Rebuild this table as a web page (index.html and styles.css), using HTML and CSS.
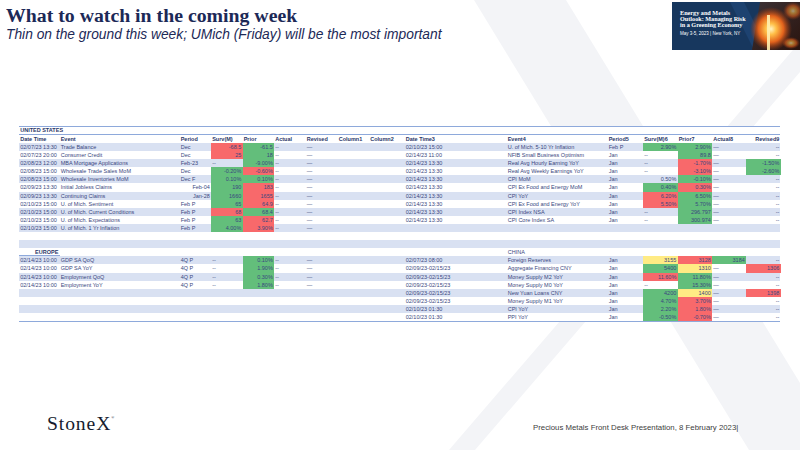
FILE: index.html
```
<!DOCTYPE html>
<html lang="en">
<head>
<meta charset="utf-8">
<title>What to watch in the coming week</title>
<link rel="stylesheet" href="styles.css">
</head>
<body>
<div class="slide">
  <svg class="watermark" viewBox="0 0 800 450" aria-hidden="true">
    <polygon points="474,0 566,0 841,450 749,450" fill="#f3f4f7"/>
    <polygon points="836,0 862,0 475,450 449,450" fill="#f3f4f7"/>
  </svg>

  <header class="top">
    <div class="titles">
      <h1>What to watch in the coming week</h1>
      <p class="sub">Thin on the ground this week; UMich (Friday) will be the most important</p>
    </div>
    <div class="banner">
      <svg class="banner-bg" viewBox="0 0 128 48" preserveAspectRatio="none" aria-hidden="true">
        <defs>
          <radialGradient id="glow" cx="0.5" cy="0.5" r="0.5">
            <stop offset="0" stop-color="#fff4c4"/>
            <stop offset="0.25" stop-color="#ffbf48"/>
            <stop offset="0.6" stop-color="#e2621c"/>
            <stop offset="1" stop-color="#a33a12" stop-opacity="0"/>
          </radialGradient>
          <linearGradient id="photo" x1="0" y1="0" x2="1" y2="1">
            <stop offset="0" stop-color="#3d3236"/>
            <stop offset="1" stop-color="#2a140e"/>
          </linearGradient>
        </defs>
        <rect width="128" height="48" fill="#17375e"/>
        <polygon points="58,0 72,0 96,48 82,48" fill="#1d4270"/>
        <polygon points="88,0 128,0 128,48 80,48" fill="url(#photo)"/>
        <ellipse cx="99" cy="27" rx="21" ry="22" fill="url(#glow)"/>
        <ellipse cx="121" cy="9" rx="10" ry="9" fill="url(#glow)" opacity="0.55"/>
        <ellipse cx="119" cy="41" rx="9" ry="6" fill="url(#glow)" opacity="0.6"/>
        <rect x="95" y="13" width="3" height="35" fill="#fff0b0" opacity="0.9"/>
      </svg>
      <div class="banner-text">
        <div class="bt">Energy and Metals</div>
        <div class="bt">Outlook: Managing Risk</div>
        <div class="bt">in a Greening Economy</div>
        <div class="bd">May 3-5, 2023 | New York, NY</div>
      </div>
    </div>
  </header>

  <section class="tbl">
    <div class="row region"><span class="lab">UNITED STATES</span></div>
    <div class="row head">
      <span>Date Time</span><span>Event</span><span>Period</span><span>Surv(M)</span><span>Prior</span><span>Actual</span><span>Revised</span><span>Column1</span><span>Column2</span>
      <span>Date Time3</span><span>Event4</span><span>Period5</span><span>Surv(M)6</span><span>Prior7</span><span>Actual8</span><span class="r">Revised9</span>
    </div>

    <div class="row s">
      <span>02/07/23 13:30</span><span>Trade Balance</span><span>Dec</span><span class="r rd">-68.5</span><span class="r g">-61.5</span><span>--</span><span>—</span><span></span><span></span>
      <span>02/10/23 15:00</span><span>U. of Mich. 5-10 Yr Inflation</span><span>Feb P</span><span class="r g">2.90%</span><span class="r g">2.90%</span><span>—</span><span class="r">--</span>
    </div>
    <div class="row">
      <span>02/07/23 20:00</span><span>Consumer Credit</span><span>Dec</span><span class="r rd">25</span><span class="r g">18</span><span>--</span><span>—</span><span></span><span></span>
      <span>02/14/23 11:00</span><span>NFIB Small Business Optimism</span><span>Jan</span><span>--</span><span class="r g">89.8</span><span>—</span><span class="r">--</span>
    </div>
    <div class="row s">
      <span>02/08/23 12:00</span><span>MBA Mortgage Applications</span><span>Feb-23</span><span>--</span><span class="r g">-9.00%</span><span>--</span><span>—</span><span></span><span></span>
      <span>02/14/23 13:30</span><span>Real Avg Hourly Earning YoY</span><span>Jan</span><span>--</span><span class="r rd">-1.70%</span><span>—</span><span class="r g">-1.50%</span>
    </div>
    <div class="row">
      <span>02/08/23 15:00</span><span>Wholesale Trade Sales MoM</span><span>Dec</span><span class="r g">-0.20%</span><span class="r rd">-0.60%</span><span>--</span><span>—</span><span></span><span></span>
      <span>02/14/23 13:30</span><span>Real Avg Weekly Earnings YoY</span><span>Jan</span><span>--</span><span class="r rd">-3.10%</span><span>—</span><span class="r g">-2.60%</span>
    </div>
    <div class="row s">
      <span>02/08/23 15:00</span><span>Wholesale Inventories MoM</span><span>Dec F</span><span class="r g">0.10%</span><span class="r g">0.10%</span><span>--</span><span>—</span><span></span><span></span>
      <span>02/14/23 13:30</span><span>CPI MoM</span><span>Jan</span><span class="r">0.50%</span><span class="r g">-0.10%</span><span>—</span><span class="r">--</span>
    </div>
    <div class="row">
      <span>02/09/23 13:30</span><span>Initial Jobless Claims</span><span class="r">Feb-04</span><span class="r g">190</span><span class="r rd">183</span><span>--</span><span>—</span><span></span><span></span>
      <span>02/14/23 13:30</span><span>CPI Ex Food and Energy MoM</span><span>Jan</span><span class="r g">0.40%</span><span class="r rd">0.30%</span><span>—</span><span class="r">--</span>
    </div>
    <div class="row s">
      <span>02/09/23 13:30</span><span>Continuing Claims</span><span class="r">Jan-28</span><span class="r g">1660</span><span class="r rd">1655</span><span>--</span><span>—</span><span></span><span></span>
      <span>02/14/23 13:30</span><span>CPI YoY</span><span>Jan</span><span class="r rd">6.20%</span><span class="r g">6.50%</span><span>—</span><span class="r">--</span>
    </div>
    <div class="row">
      <span>02/10/23 15:00</span><span>U. of Mich. Sentiment</span><span>Feb P</span><span class="r g">65</span><span class="r rd">64.9</span><span>--</span><span>—</span><span></span><span></span>
      <span>02/14/23 13:30</span><span>CPI Ex Food and Energy YoY</span><span>Jan</span><span class="r rd">5.50%</span><span class="r g">5.70%</span><span>—</span><span class="r">--</span>
    </div>
    <div class="row s">
      <span>02/10/23 15:00</span><span>U. of Mich. Current Conditions</span><span>Feb P</span><span class="r rd">68</span><span class="r g">68.4</span><span>--</span><span>—</span><span></span><span></span>
      <span>02/14/23 13:30</span><span>CPI Index NSA</span><span>Jan</span><span>--</span><span class="r g">296.797</span><span>—</span><span class="r">--</span>
    </div>
    <div class="row">
      <span>02/10/23 15:00</span><span>U. of Mich. Expectations</span><span>Feb P</span><span class="r g">63</span><span class="r rd">62.7</span><span>--</span><span>—</span><span></span><span></span>
      <span>02/14/23 13:30</span><span>CPI Core Index SA</span><span>Jan</span><span>--</span><span class="r g">300.974</span><span>—</span><span class="r">--</span>
    </div>
    <div class="row s">
      <span>02/10/23 15:00</span><span>U. of Mich. 1 Yr Inflation</span><span>Feb P</span><span class="r g">4.00%</span><span class="r rd">3.90%</span><span>--</span><span>—</span>
    </div>
    <div class="row"></div>
    <div class="row s"></div>
    <div class="row">
      <span class="eu">EUROPE</span><span></span><span></span><span></span><span></span><span></span><span></span><span></span><span></span><span></span><span>CHINA</span>
    </div>
    <div class="row s">
      <span>02/14/23 10:00</span><span>GDP SA QoQ</span><span>4Q P</span><span>--</span><span class="r g">0.10%</span><span>--</span><span>—</span><span></span><span></span>
      <span>02/07/23 08:00</span><span>Foreign Reserves</span><span>Jan</span><span class="r y">3155</span><span class="r rd">3128</span><span class="r g">3184</span><span class="r">--</span>
    </div>
    <div class="row">
      <span>02/14/23 10:00</span><span>GDP SA YoY</span><span>4Q P</span><span>--</span><span class="r g">1.90%</span><span>--</span><span>—</span><span></span><span></span>
      <span>02/09/23-02/15/23</span><span>Aggregate Financing CNY</span><span>Jan</span><span class="r g">5400</span><span class="r y">1310</span><span>—</span><span class="r rd">1306</span>
    </div>
    <div class="row s">
      <span>02/14/23 10:00</span><span>Employment QoQ</span><span>4Q P</span><span>--</span><span class="r g">0.30%</span><span>--</span><span>—</span><span></span><span></span>
      <span>02/09/23-02/15/23</span><span>Money Supply M2 YoY</span><span>Jan</span><span class="r rd">11.60%</span><span class="r g">11.80%</span><span>—</span><span class="r">--</span>
    </div>
    <div class="row">
      <span>02/14/23 10:00</span><span>Employment YoY</span><span>4Q P</span><span>--</span><span class="r g">1.80%</span><span>--</span><span>—</span><span></span><span></span>
      <span>02/09/23-02/15/23</span><span>Money Supply M0 YoY</span><span>Jan</span><span>--</span><span class="r g">15.30%</span><span>—</span><span class="r">--</span>
    </div>
    <div class="row s">
      <span></span><span></span><span></span><span></span><span></span><span></span><span></span><span></span><span></span>
      <span>02/09/23-02/15/23</span><span>New Yuan Loans CNY</span><span>Jan</span><span class="r g">4200</span><span class="r y">1400</span><span>—</span><span class="r rd">1398</span>
    </div>
    <div class="row">
      <span></span><span></span><span></span><span></span><span></span><span></span><span></span><span></span><span></span>
      <span>02/09/23-02/15/23</span><span>Money Supply M1 YoY</span><span>Jan</span><span class="r g">4.70%</span><span class="r rd">3.70%</span><span>—</span><span class="r">--</span>
    </div>
    <div class="row s">
      <span></span><span></span><span></span><span></span><span></span><span></span><span></span><span></span><span></span>
      <span>02/10/23 01:30</span><span>CPI YoY</span><span>Jan</span><span class="r g">2.20%</span><span class="r rd">1.80%</span><span>—</span><span class="r">--</span>
    </div>
    <div class="row">
      <span></span><span></span><span></span><span></span><span></span><span></span><span></span><span></span><span></span>
      <span>02/10/23 01:30</span><span>PPI YoY</span><span>Jan</span><span class="r g">-0.50%</span><span class="r rd">-0.70%</span><span>—</span><span class="r">--</span>
    </div>
  </section>

  <footer class="foot">
    <div class="logo">StoneX<span class="reg">®</span></div>
    <div class="foot-text">Precious Metals Front Desk Presentation, 8 February 2023|</div>
  </footer>
</div>
</body>
</html>
```

FILE: styles.css
```
html, body {
  margin: 0;
  padding: 0;
}

body {
  width: 800px;
  height: 450px;
  overflow: hidden;
  background: #ffffff;
}

.slide {
  position: relative;
  width: 800px;
  height: 450px;
  overflow: hidden;
  font-family: "Liberation Sans", Arial, sans-serif;
}

.watermark {
  position: absolute;
  left: 0;
  top: 0;
  width: 800px;
  height: 450px;
  z-index: 0;
}

.top,
.tbl,
.foot {
  position: relative;
  z-index: 1;
}

/* header */
.top {
  display: flex;
  justify-content: space-between;
  height: 50px;
}

.titles {
  padding: 4.3px 0 0 6px;
}

h1 {
  margin: 0;
  font: 700 19.8px/22px "Liberation Serif", "Times New Roman", serif;
  color: #1c2957;
}

.sub {
  margin: 1px 0 0;
  font: italic 13.8px/16px "Liberation Sans", Arial, sans-serif;
  color: #1c2957;
}

.banner {
  display: grid;
  width: 128px;
  height: 48px;
  margin-top: 2px;
}

.banner > * {
  grid-area: 1 / 1;
}

.banner-bg {
  display: block;
  width: 128px;
  height: 48px;
}

.banner-text {
  padding: 8px 0 0 8px;
  color: #ffffff;
}

.bt {
  font: 700 6.2px/6px "Liberation Serif", serif;
  white-space: nowrap;
}

.bd {
  margin-top: 3px;
  font: 4.5px/6px "Liberation Sans", Arial, sans-serif;
  white-space: nowrap;
}

/* table */
.tbl {
  margin: 76px 0 0 19px;
  width: 761px;
  border-top: 1px solid #8ea9db;
  border-bottom: 1px solid #8ea9db;
  background: #ffffff;
  color: #3a4780;
  font-size: 5.5px;
}

.row {
  display: grid;
  grid-template-columns: 40.5px 120px 31.5px 31.5px 31.5px 31.5px 32px 31.5px 35.5px 102px 101px 35.5px 34.5px 34.5px 34px 34.5px;
  height: 8.1px;
  line-height: 8.1px;
}

.row > span {
  padding: 0 1.2px;
  overflow: hidden;
  white-space: nowrap;
}

.region {
  height: 8px;
  line-height: 7px;
  box-sizing: border-box;
  border-bottom: 1px solid #8ea9db;
}

.head {
  height: 8px;
  line-height: 8px;
  font-weight: 700;
  color: #2a3668;
}

.lab {
  font-weight: 700;
  grid-column: 1 / 3;
  color: #2a3668;
}

.s {
  background: #d9e1f2;
}

.r {
  text-align: right;
}

.g {
  background: #63be7b;
}

.rd {
  background: #f8696b;
}

.y {
  background: #ffeb84;
}

.eu {
  font-weight: 700;
  text-align: right;
  color: #2a3668;
  box-sizing: border-box;
  border-bottom: 1px solid #8ea9db;
}

/* footer */
.foot {
  display: flex;
  align-items: baseline;
  margin-top: 86.2px;
  padding-left: 47px;
}

.logo {
  width: 486px;
  font: 19.6px/20px "Liberation Serif", "Times New Roman", serif;
  letter-spacing: 0.9px;
  color: #161b2e;
}

.reg {
  font-size: 4px;
  letter-spacing: 0;
  vertical-align: 11px;
}

.foot-text {
  font: 7.8px "Liberation Sans", Arial, sans-serif;
  color: #404040;
  white-space: nowrap;
}
```
